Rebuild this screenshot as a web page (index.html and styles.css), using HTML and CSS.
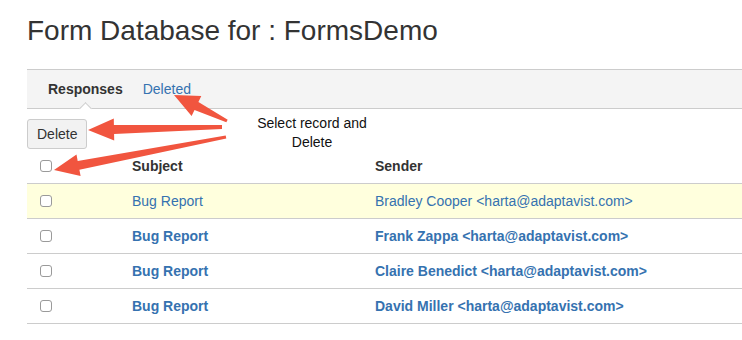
FILE: index.html
```html
<!doctype html>
<html>

<head>
    <title>Form Database for : FormsDemo</title>
    <meta charset="utf-8" />
    <link rel="stylesheet" href="styles.css">
</head>

<body>
    <div class="page">
        <h1>Form Database for : FormsDemo</h1>
        <div class="tabs">
            <span class="tab active">Responses</span>
            <a class="tab" href="#">Deleted</a>
        </div>
        <button class="btn">Delete</button>
        <table class="records">
            <thead>
                <tr>
                    <th class="col-check"><input type="checkbox" /></th>
                    <th class="col-subject">Subject</th>
                    <th>Sender</th>
                </tr>
            </thead>
            <tbody>
                <tr class="read">
                    <td class="col-check"><input type="checkbox" /></td>
                    <td class="col-subject"><a href="#">Bug Report</a></td>
                    <td><a href="#">Bradley Cooper &lt;harta@adaptavist.com&gt;</a></td>
                </tr>
                <tr class="unread">
                    <td class="col-check"><input type="checkbox" /></td>
                    <td class="col-subject"><a href="#">Bug Report</a></td>
                    <td><a href="#">Frank Zappa &lt;harta@adaptavist.com&gt;</a></td>
                </tr>
                <tr class="unread">
                    <td class="col-check"><input type="checkbox" /></td>
                    <td class="col-subject"><a href="#">Bug Report</a></td>
                    <td><a href="#">Claire Benedict &lt;harta@adaptavist.com&gt;</a></td>
                </tr>
                <tr class="unread">
                    <td class="col-check"><input type="checkbox" /></td>
                    <td class="col-subject"><a href="#">Bug Report</a></td>
                    <td><a href="#">David Miller &lt;harta@adaptavist.com&gt;</a></td>
                </tr>
            </tbody>
        </table>
    </div>

    <!-- annotation overlay -->
    <div class="note">Select record and<br>Delete</div>
    <svg class="arrows" width="742" height="340" viewBox="0 0 742 340">
        <polygon points="227.7,119.7 198.4,102 201.3,96.1 174,95 191.6,115.9 194.5,110 226.3,122.3" />
        <polygon points="222,125 113.9,124.9 113.8,118.4 88,130 114.2,140.4 114.1,133.9 222,129" />
        <polygon points="225.7,135.5 77.7,160.9 76.5,154.5 54,170 80.6,176.1 79.4,169.7 226.3,138.5" />
    </svg>
</body>

</html>
```

FILE: styles.css
```css
body { margin: 0; font-family: "Liberation Sans", Arial, sans-serif; font-size: 14px; color: #333; background: #fff; overflow: hidden; }
a { color: #3572b0; text-decoration: none; }
.page { margin-left: 27px; }
h1 { margin: 0 0 22px; padding-top: 15px; font-size: 28px; line-height: 32px; font-weight: normal; color: #333; }
.tabs { display: flex; gap: 20px; height: 38px; align-items: center; padding-left: 21px; background: #f4f4f4; border-top: 1px solid #ccc; border-bottom: 1px solid #ccc; }
.tab { position: relative; line-height: 38px; }
.tab.active { font-weight: bold; color: #333; }
.tab.active::after { content: ""; position: absolute; left: 50%; bottom: -5px; width: 8px; height: 8px; margin-left: -4px; background: #fff; border-top: 1px solid #ccc; border-left: 1px solid #ccc; transform: rotate(45deg); }
.btn { display: block; margin-top: 10px; height: 30px; padding: 0 9px; font: inherit; color: #333; background: #f2f2f2; border: 1px solid #ccc; border-radius: 3px; }
.records { width: 100%; border-collapse: collapse; }
.records th, .records td { height: 34px; padding: 0 10px; text-align: left; border-bottom: 1px solid #ccc; }
.records th { font-weight: bold; color: #333; }
.records .col-check { width: 72px; padding-left: 13px; }
.records .col-subject { width: 223px; }
.records tr.read td { background: #ffffdd; }
.records tr.unread a { font-weight: bold; }
input[type=checkbox] { -webkit-appearance: none; appearance: none; display: block; margin: 0; width: 12px; height: 12px; border: 1px solid #9a9a9a; border-radius: 3px; background: #fff; }
.note { position: absolute; left: 248px; top: 114px; width: 128px; text-align: center; line-height: 19px; color: #111; }
.arrows { position: absolute; left: 0; top: 0; }
.arrows polygon { fill: #f1553f; }
```
